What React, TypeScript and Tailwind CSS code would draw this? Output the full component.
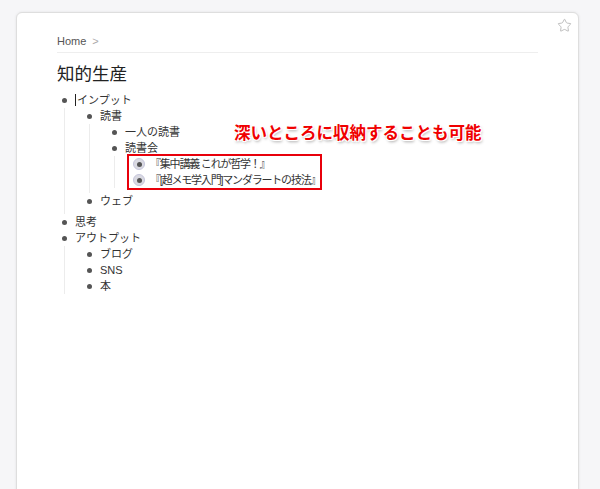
import React from 'react';
import { Star } from 'lucide-react';

type Node = {
  text: string;
  children?: Node[];
  caret?: boolean;
  halo?: boolean;
  gap?: boolean;
};

const tree: Node[] = [
  {
    text: 'インプット',
    caret: true,
    gap: true,
    children: [
      {
        text: '読書',
        gap: true,
        children: [
          { text: '一人の読書' },
          {
            text: '読書会',
            children: [
              { text: '『集中講義 これが哲学！』', halo: true },
              { text: '『[超メモ学入門]マンダラートの技法』', halo: true },
            ],
          },
        ],
      },
      { text: 'ウェブ' },
    ],
  },
  { text: '思考' },
  {
    text: 'アウトプット',
    children: [{ text: 'ブログ' }, { text: 'SNS' }, { text: '本' }],
  },
];

function Item({ node }: { node: Node }) {
  return (
    <li>
      <div className="flex h-[16px] items-center">
        <div className="flex w-[14px] justify-center">
          {node.halo ? (
            <span className="flex h-[12px] w-[12px] items-center justify-center rounded-full border border-[#c6c6dc] bg-[#dadae2]">
              <span className="h-[5px] w-[5px] rounded-full bg-[#555]" />
            </span>
          ) : (
            <span className="h-[5px] w-[5px] rounded-full bg-[#555]" />
          )}
        </div>
        <span
          className={`ml-[4px] flex items-center whitespace-nowrap text-[11px] leading-[16px] text-[#333] ${
            node.halo ? 'tracking-[-1.2px]' : ''
          }`}
        >
          {node.caret && <span className="mr-px inline-block h-[12px] w-px bg-[#222]" />}
          {node.text}
        </span>
      </div>
      {node.children && (
        <ul className={`ml-[7px] border-l border-[#ececec] pl-[17px] ${node.gap ? 'pb-[5px]' : ''}`}>
          {node.children.map((c) => (
            <Item key={c.text} node={c} />
          ))}
        </ul>
      )}
    </li>
  );
}

export default function App() {
  return (
    <div
      className="h-[489px] overflow-hidden bg-[#f6f6f8] pl-[16px] pt-[12px]"
      style={{ fontFamily: '"Liberation Sans", "Noto Sans CJK JP", sans-serif' }}
    >
      <div className="relative h-[520px] w-[563px] rounded-[6px] border border-[#dedede] bg-white px-[40px] pt-[21px] shadow-[0_0_3px_rgba(0,0,0,0.08)]">
        <Star className="absolute left-[540px] top-[5px] h-[15px] w-[15px] text-[#b0b0b0]" strokeWidth={1.3} />

        <div className="box-content flex h-[14px] items-center border-b border-[#eeeeee] pb-[4px] text-[11px] leading-[14px]">
          <span className="text-[#555]">Home</span>
          <span className="ml-[6px] text-[#aaa]">&gt;</span>
        </div>

        <h1 className="mt-[9px] text-[17.5px] leading-[24px] text-[#222]">知的生産</h1>

        <ul className="mt-[6px]">
          {tree.map((n) => (
            <Item key={n.text} node={n} />
          ))}
        </ul>

        <div className="absolute left-[110px] top-[141px] h-[36px] w-[195px] border-[2.5px] border-[#e8000b]" />

        <div
          className="absolute left-[217px] top-[111px] whitespace-nowrap text-[16.5px] font-bold leading-[18px] text-[#f00000]"
          style={{ textShadow: '0 0 2px #fff, 1px 1px 0 #fff, -1px -1px 0 #fff, 1px -1px 0 #fff, -1px 1px 0 #fff, 1px 2px 3px rgba(0,0,0,0.35)' }}
        >
          深いところに収納することも可能
        </div>
      </div>
    </div>
  );
}
